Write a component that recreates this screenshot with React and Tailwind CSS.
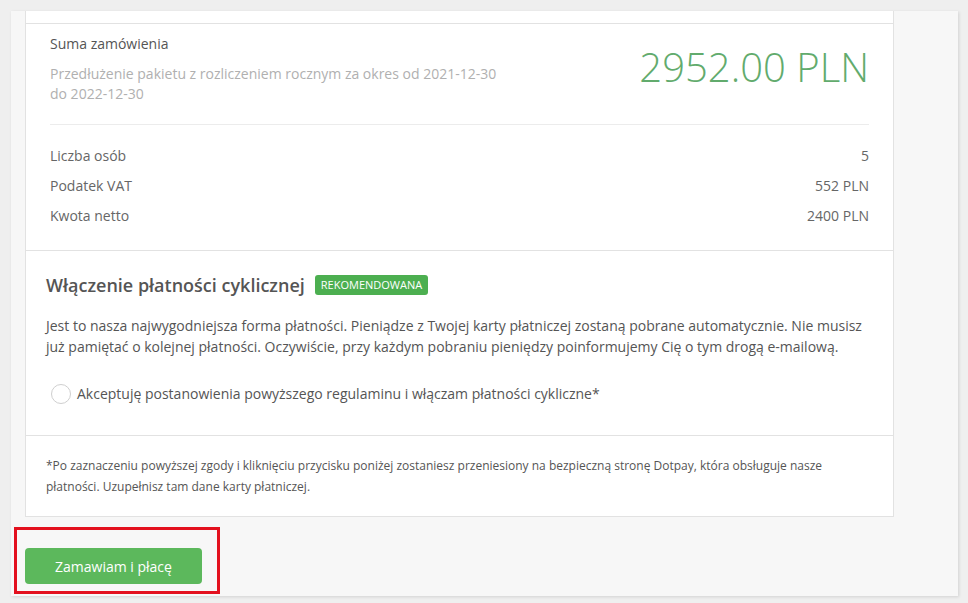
const rows = [
  ['Liczba osób', '5'],
  ['Podatek VAT', '552 PLN'],
  ['Kwota netto', '2400 PLN'],
];

export default function App() {
  return (
    <div
      className="h-[603px] w-[968px] overflow-hidden bg-[#efefef] pt-[11px] pl-[11px]"
      style={{ fontFamily: '"Open Sans", "Noto Sans", sans-serif' }}
    >
      <div className="w-[947px] h-[585px] bg-[#f7f7f7] shadow-[1px_1px_3px_rgba(0,0,0,0.12)] pl-[14px]">
        {/* order card */}
        <div className="w-[869px] bg-white border-x border-b border-[#e2e2e2]">
          <div className="h-[13px] border-b border-[#e2e2e2]" />

          {/* summary */}
          <div className="px-[24px] pt-[10px]">
            <div className="flex justify-between">
              <div className="w-[455px]">
                <p className="text-[14px] leading-[20px] text-[#555]">Suma zamówienia</p>
                <p className="mt-[10px] text-[14px] leading-[20px] text-[#b0b0b0]">
                  Przedłużenie pakietu z rozliczeniem rocznym za okres od 2021-12-30 do 2022-12-30
                </p>
              </div>
              <div className="pt-[8px] text-[40px] leading-[50px] font-light text-[#62ab6d]">2952.00 PLN</div>
            </div>
            <div className="mt-[20px] border-b border-[#ececec]" />
            <div className="pt-[16px] pb-[19px]">
              {rows.map(([label, value]) => (
                <div key={label} className="flex justify-between text-[14px] leading-[30px] text-[#666]">
                  <span>{label}</span>
                  <span>{value}</span>
                </div>
              ))}
            </div>
          </div>

          {/* recurring payment */}
          <div className="border-t border-[#e2e2e2] px-[20px] pt-[21px] pb-[31px]">
            <div className="flex items-center gap-[10px]">
              <h2 className="text-[18px] leading-[26px] font-semibold text-[#555]">Włączenie płatności cyklicznej</h2>
              <span className="h-[20px] px-[6px] rounded-[3px] bg-[#4caf50] text-white text-[11px] leading-[20px] uppercase">
                Rekomendowana
              </span>
            </div>
            <p className="mt-[17px] text-[14px] leading-[21px] text-[#555]">
              Jest to nasza najwygodniejsza forma płatności. Pieniądze z Twojej karty płatniczej zostaną pobrane automatycznie. Nie musisz już pamiętać o kolejnej płatności. Oczywiście, przy każdym pobraniu pieniędzy poinformujemy Cię o tym drogą e-mailową.
            </p>
            <label className="mt-[27px] ml-[5px] flex items-center gap-[6px] text-[14px] leading-[20px] text-[#555]">
              <span className="w-[20px] h-[20px] rounded-full border border-[#cfcfcf] bg-white" />
              Akceptuję postanowienia powyższego regulaminu i włączam płatności cykliczne*
            </label>
          </div>

          {/* footnote */}
          <div className="border-t border-[#e2e2e2] px-[20px] pt-[19px] pb-[19px]">
            <p className="text-[12px] leading-[21px] text-[#555]">
              *Po zaznaczeniu powyższej zgody i kliknięciu przycisku poniżej zostaniesz przeniesiony na bezpieczną stronę Dotpay, która obsługuje nasze płatności. Uzupełnisz tam dane karty płatniczej.
            </p>
          </div>
        </div>

        {/* order button with highlight */}
        <div className="-ml-[11px] mt-[10px] w-[206px] h-[67px] border-[3px] border-[#e3101e] pl-[8px] pt-[18px]">
          <button className="w-[177px] h-[36px] rounded-[4px] bg-[#5cb85c] text-white text-[14px]">
            Zamawiam i płacę
          </button>
        </div>
      </div>
    </div>
  );
}
